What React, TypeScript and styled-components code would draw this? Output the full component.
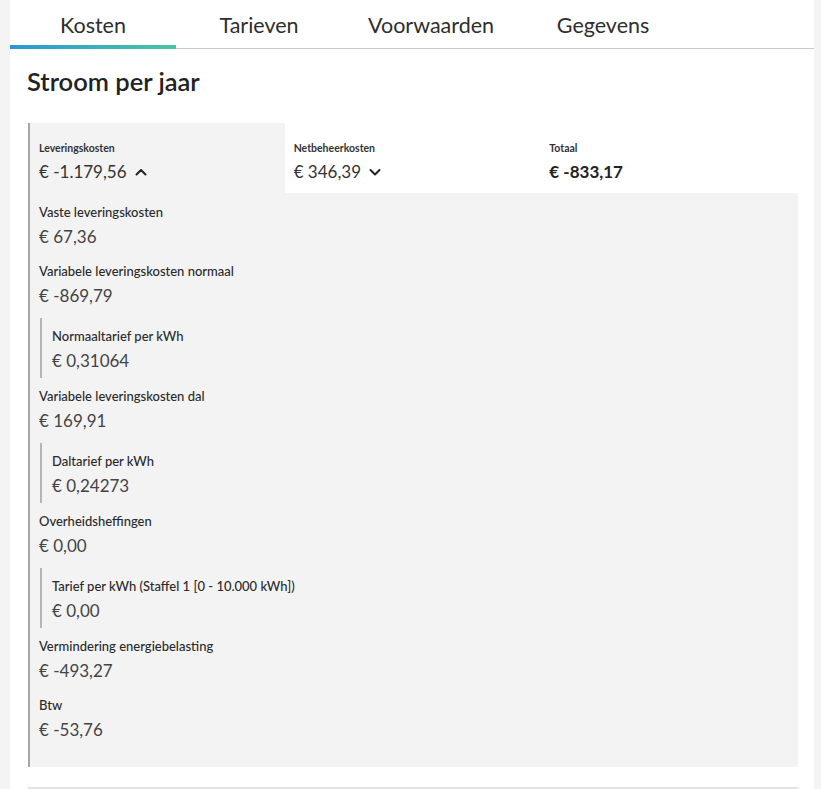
import React from 'react';
import styled, { createGlobalStyle } from 'styled-components';

const GlobalStyle = createGlobalStyle`
  html, body {
    margin: 0;
    padding: 0;
    background: #f4f4f4;
    font-family: Lato, 'Open Sans', sans-serif;
    color: #333;
  }
`;

type Line = { label: string; value: string; sub?: { label: string; value: string } };

const lines: Line[] = [
  { label: 'Vaste leveringskosten', value: '€ 67,36' },
  {
    label: 'Variabele leveringskosten normaal',
    value: '€ -869,79',
    sub: { label: 'Normaaltarief per kWh', value: '€ 0,31064' },
  },
  {
    label: 'Variabele leveringskosten dal',
    value: '€ 169,91',
    sub: { label: 'Daltarief per kWh', value: '€ 0,24273' },
  },
  {
    label: 'Overheidsheffingen',
    value: '€ 0,00',
    sub: { label: 'Tarief per kWh (Staffel 1 [0 - 10.000 kWh])', value: '€ 0,00' },
  },
  { label: 'Vermindering energiebelasting', value: '€ -493,27' },
  { label: 'Btw', value: '€ -53,76' },
];

const tabs = ['Kosten', 'Tarieven', 'Voorwaarden', 'Gegevens'];

const Chevron = ({ up }: { up?: boolean }) => (
  <svg width="14" height="14" viewBox="0 0 14 14" fill="none">
    <path
      d={up ? 'M2.5 9.5 L7 5 L11.5 9.5' : 'M2.5 5 L7 9.5 L11.5 5'}
      stroke="#222"
      strokeWidth="2"
      strokeLinecap="round"
      strokeLinejoin="round"
    />
  </svg>
);

export default function App() {
  return (
    <>
      <GlobalStyle />
      <Card>
        <TabBar>
          {tabs.map((t, i) => (
            <Tab key={t} $active={i === 0}>
              {t}
            </Tab>
          ))}
        </TabBar>
        <Content>
          <Title>Stroom per jaar</Title>
          <Summary>
            <SummaryCell $open>
              <SumLabel>Leveringskosten</SumLabel>
              <SumValue>
                € -1.179,56 <Chevron up />
              </SumValue>
            </SummaryCell>
            <SummaryCell>
              <SumLabel>Netbeheerkosten</SumLabel>
              <SumValue>
                € 346,39 <Chevron />
              </SumValue>
            </SummaryCell>
            <SummaryCell>
              <SumLabel>Totaal</SumLabel>
              <SumValue $bold>€ -833,17</SumValue>
            </SummaryCell>
          </Summary>
          <Details>
            {lines.map((l) => (
              <React.Fragment key={l.label}>
                <Entry>
                  <EntryLabel>{l.label}</EntryLabel>
                  <EntryValue>{l.value}</EntryValue>
                </Entry>
                {l.sub && (
                  <SubBlock>
                    <EntryLabel>{l.sub.label}</EntryLabel>
                    <EntryValue>{l.sub.value}</EntryValue>
                  </SubBlock>
                )}
              </React.Fragment>
            ))}
          </Details>
          <NextSection />
        </Content>
      </Card>
    </>
  );
}

const Card = styled.div`
  margin: 0 7px 0 10px;
  background: #fff;
  min-height: 789px;
`;

const TabBar = styled.div`
  display: flex;
  height: 48px;
  border-bottom: 1px solid #c8c8c8;
`;

const Tab = styled.div<{ $active?: boolean }>`
  position: relative;
  min-width: 166px;
  box-sizing: border-box;
  padding: 2px 26px 0;
  display: flex;
  align-items: center;
  justify-content: center;
  font-size: 21.5px;
  color: #2e2e2e;

  &::after {
    content: '';
    display: ${(p) => (p.$active ? 'block' : 'none')};
    position: absolute;
    left: 0;
    right: 0;
    bottom: -1px;
    height: 4px;
    background: linear-gradient(90deg, #2a97d6, #4cc4a2);
  }
`;

const Content = styled.div`
  padding: 0 16px 0 18px;
`;

const Title = styled.h2`
  margin: 0;
  padding: 17px 0 0 0;
  height: 56px;
  box-sizing: border-box;
  font-size: 25.5px;
  font-weight: 600;
  color: #222;
  line-height: 30px;
  margin-left: -1px;
  margin-bottom: 18px;
`;

const Summary = styled.div`
  display: grid;
  grid-template-columns: repeat(3, 1fr);
  height: 70px;
`;

const SummaryCell = styled.div<{ $open?: boolean }>`
  background: ${(p) => (p.$open ? '#f3f3f3' : '#fff')};
  border-left: 2px solid ${(p) => (p.$open ? '#a6a6a6' : 'transparent')};
  padding: 18px 0 0 9px;
  box-sizing: border-box;
  &:not(:first-child) {
    border-left: none;
    padding-left: 9px;
  }
  &:last-child {
    padding-left: 8px;
  }
`;

const SumLabel = styled.div`
  font-size: 10.5px;
  font-weight: 700;
  line-height: 14px;
  color: #333;
`;

const SumValue = styled.div<{ $bold?: boolean }>`
  display: flex;
  align-items: center;
  gap: 7px;
  margin-top: 6px;
  font-size: 17px;
  line-height: 22px;
  font-weight: ${(p) => (p.$bold ? 700 : 400)};
  color: ${(p) => (p.$bold ? '#222' : '#333')};
`;

const Details = styled.div`
  background: #f3f3f3;
  border-left: 2px solid #a6a6a6;
  padding: 10px 9px 12px 9px;
`;

const Entry = styled.div`
  padding-bottom: 13px;
`;

const EntryLabel = styled.div`
  font-size: 13px;
  line-height: 18px;
  font-weight: 500;
  color: #2a2a2a;
`;

const EntryValue = styled.div`
  margin-top: 4px;
  font-size: 17px;
  line-height: 24px;
  color: #444;
`;

const SubBlock = styled.div`
  margin: -3px 0 9px 1px;
  padding: 9px 0 5px 10px;
  border-left: 2px solid #b5b5b5;
`;

const NextSection = styled.div`
  margin-top: 20px;
  border-top: 2px solid #e2e2e2;
  height: 10px;
`;
